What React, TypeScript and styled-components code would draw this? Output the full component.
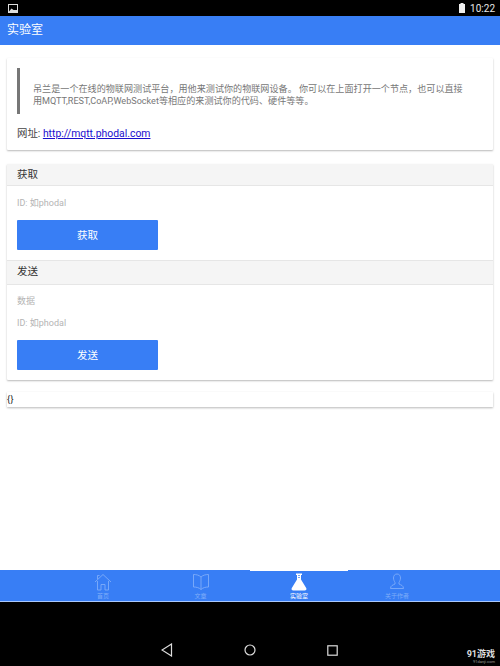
import styled, { createGlobalStyle } from "styled-components";

const GlobalStyle = createGlobalStyle`
  html, body {
    margin: 0;
    padding: 0;
    background: #000;
  }
  * {
    box-sizing: border-box;
  }
`;

const FONT = `Roboto, "Noto Sans CJK SC", sans-serif`;
const BLUE = "#387ef5";

export default function App() {
  return (
    <>
      <GlobalStyle />
      <Page>
        <StatusBar>
          <svg width="10" height="9" viewBox="0 0 10 9">
            <rect x="0.5" y="0.5" width="9" height="8" fill="none" stroke="#ddd" />
            <path d="M1 7.5 L3.5 4.5 L5.5 6 L9 6 L9 8 L1 8Z" fill="#ddd" />
          </svg>
          <StatusRight>
            <svg width="6" height="10" viewBox="0 0 6 10">
              <rect x="1.5" y="0" width="3" height="1" fill="#eee" />
              <rect x="0" y="1" width="6" height="9" fill="#eee" />
            </svg>
            <Clock>10:22</Clock>
          </StatusRight>
        </StatusBar>
        <Header>实验室</Header>
        <Content>
          <Card>
            <Intro>
              <Quote>
                吊兰是一个在线的物联网测试平台，用他来测试你的物联网设备。 你可以在上面打开一个节点，也可以直接用MQTT,REST,CoAP,WebSocket等相应的来测试你的代码、硬件等等。
              </Quote>
              <Site>
                网址: <SiteLink href="#">http://mqtt.phodal.com</SiteLink>
              </Site>
            </Intro>
          </Card>
          <Card>
            <SectionTitle>获取</SectionTitle>
            <Form $top={5}>
              <Field>ID: 如phodal</Field>
              <ActionButton>获取</ActionButton>
            </Form>
            <SectionTitle $bordered>发送</SectionTitle>
            <Form $top={4}>
              <Field>数据</Field>
              <Field>ID: 如phodal</Field>
              <ActionButton>发送</ActionButton>
            </Form>
          </Card>
          <ResultCard>{"{}"}</ResultCard>
        </Content>
        <TabBar>
          <Tab>
            <svg width="18" height="18" viewBox="0 0 18 18" fill="none" stroke="currentColor" strokeWidth="0.9">
              <path d="M1 9 L9 1.5 L17 9" />
              <path d="M3.5 8 V17 H7 V11.5 H11 V17 H14.5 V8" />
              <path d="M3.5 2.5 V6 M3.5 2.5 H5.5" />
            </svg>
            <TabLabel>首页</TabLabel>
          </Tab>
          <Tab>
            <svg width="18" height="18" viewBox="0 0 18 18" fill="none" stroke="currentColor" strokeWidth="0.9">
              <path d="M9 4 C7 2 4 1.5 1.5 1.5 V14 C4 14 7 14.5 9 16.5 C11 14.5 14 14 16.5 14 V1.5 C14 1.5 11 2 9 4Z" />
              <path d="M9 4 V16.5" />
            </svg>
            <TabLabel>文章</TabLabel>
          </Tab>
          <Tab $active>
            <svg width="16" height="18" viewBox="0 0 16 18">
              <path
                d="M5 0.5 H11 V2 H10 V6.5 L15.2 15 C16 16.5 15 17.5 13.8 17.5 H2.2 C1 17.5 0 16.5 0.8 15 L6 6.5 V2 H5Z"
                fill="currentColor"
              />
              <path d="M7 2.5 H9 M7 4.5 H9" stroke={BLUE} strokeWidth="0.7" />
            </svg>
            <TabLabel>实验室</TabLabel>
          </Tab>
          <Tab>
            <svg width="18" height="18" viewBox="0 0 18 18" fill="none" stroke="currentColor" strokeWidth="0.9">
              <path d="M9 1 C6.5 1 5.5 3 5.5 5 C5.5 7 6.5 8.5 7 9.5 V11 C5 12 2.5 12.5 2.5 15.5 H15.5 C15.5 12.5 13 12 11 11 V9.5 C11.5 8.5 12.5 7 12.5 5 C12.5 3 11.5 1 9 1Z" />
            </svg>
            <TabLabel>关于作者</TabLabel>
          </Tab>
        </TabBar>
        <NavBar>
          <svg width="12" height="14" viewBox="0 0 12 14" fill="none" stroke="#ddd" strokeWidth="1.2">
            <path d="M10.5 1 V13 L1 7Z" />
          </svg>
          <svg width="12" height="12" viewBox="0 0 12 12" fill="none" stroke="#ddd" strokeWidth="1.2">
            <circle cx="6" cy="6" r="5" />
          </svg>
          <svg width="11" height="11" viewBox="0 0 11 11" fill="none" stroke="#ddd" strokeWidth="1.2">
            <rect x="0.8" y="0.8" width="9.4" height="9.4" />
          </svg>
          <Watermark>
            <WatermarkName>91游戏</WatermarkName>
            <WatermarkUrl>91danji.com</WatermarkUrl>
          </Watermark>
        </NavBar>
      </Page>
    </>
  );
}

const Page = styled.div`
  width: 500px;
  height: 666px;
  display: flex;
  flex-direction: column;
  overflow: hidden;
  background: #fff;
  font-family: ${FONT};
`;

const StatusBar = styled.div`
  height: 16px;
  flex: none;
  background: #000;
  display: flex;
  align-items: center;
  justify-content: space-between;
  padding: 0 5px 0 8px;
`;

const StatusRight = styled.div`
  display: flex;
  align-items: center;
  gap: 5px;
`;

const Clock = styled.span`
  color: #e8e8e8;
  font-size: 10px;
`;

const Header = styled.div`
  height: 29px;
  flex: none;
  background: ${BLUE};
  color: #fff;
  font-size: 12px;
  line-height: 29px;
  padding-left: 7px;
`;

const Content = styled.div`
  flex: 1;
  padding: 13px 7px 0;
  display: flex;
  flex-direction: column;
  gap: 14px;
`;

const Card = styled.div`
  background: #fff;
  border-radius: 1px;
  box-shadow: 0 1px 2px rgba(0, 0, 0, 0.28);
`;

const Intro = styled.div`
  height: 92px;
  padding: 10px 10px 0;
`;

const Quote = styled.blockquote`
  margin: 0;
  height: 46px;
  border-left: 3px solid #777;
  padding: 16px 14px 0 13px;
  color: #777;
  font-size: 9.1px;
  line-height: 11.5px;
`;

const Site = styled.div`
  margin-top: 13px;
  color: #444;
  font-size: 10.4px;
  line-height: 14px;
`;

const SiteLink = styled.a`
  color: #1a0dce;
`;

const SectionTitle = styled.div<{ $bordered?: boolean }>`
  height: ${(p) => (p.$bordered ? 25 : 22)}px;
  background: #f5f5f5;
  border-top: ${(p) => (p.$bordered ? "1px solid #e6e6e6" : "none")};
  border-bottom: 1px solid #e6e6e6;
  padding-left: 10px;
  color: #333;
  font-size: 10.5px;
  line-height: 22px;
`;

const Form = styled.div<{ $top: number }>`
  padding: ${(p) => p.$top}px 10px 10px;
`;

const Field = styled.div`
  height: 22px;
  display: flex;
  align-items: center;
  color: #b4b4b4;
  font-size: 9px;
`;

const ActionButton = styled.button`
  display: block;
  width: 141px;
  height: 30px;
  margin-top: 7px;
  padding: 0 0 2px;
  border: none;
  border-radius: 1px;
  background: ${BLUE};
  color: #fff;
  font-family: ${FONT};
  font-size: 10.5px;
`;

const ResultCard = styled.div`
  height: 15px;
  margin-top: -2px;
  background: #fff;
  box-shadow: 0 1px 2px rgba(0, 0, 0, 0.28);
  color: #222;
  font-size: 9px;
  line-height: 14px;
  letter-spacing: 0.5px;
`;

const TabBar = styled.div`
  height: 32px;
  flex: none;
  background: ${BLUE};
  border-bottom: 1px solid #a9c8fb;
  display: grid;
  grid-template-columns: 96px 99px 98px 98px;
  padding-left: 55px;
`;

const Tab = styled.div<{ $active?: boolean }>`
  display: flex;
  flex-direction: column;
  align-items: center;
  padding-top: 2px;
  color: ${(p) => (p.$active ? "#fff" : "#7fadf9")};
  border-top: 1px solid ${(p) => (p.$active ? "#fff" : BLUE)};
`;

const TabLabel = styled.span`
  font-size: 6px;
  line-height: 8px;
  margin-top: 1px;
`;

const NavBar = styled.div`
  height: 64px;
  flex: none;
  background: #000;
  position: relative;
  display: flex;
  align-items: center;
  justify-content: center;
  gap: 71px;
  padding: 32px 2px 0 0;
`;

const Watermark = styled.div`
  position: absolute;
  right: 5px;
  bottom: 2px;
  display: flex;
  flex-direction: column;
  align-items: flex-end;
  color: #ddd;
`;

const WatermarkName = styled.span`
  font-size: 9px;
  line-height: 10px;
  font-weight: 700;
`;

const WatermarkUrl = styled.span`
  font-size: 4px;
  line-height: 5px;
  color: #999;
`;
